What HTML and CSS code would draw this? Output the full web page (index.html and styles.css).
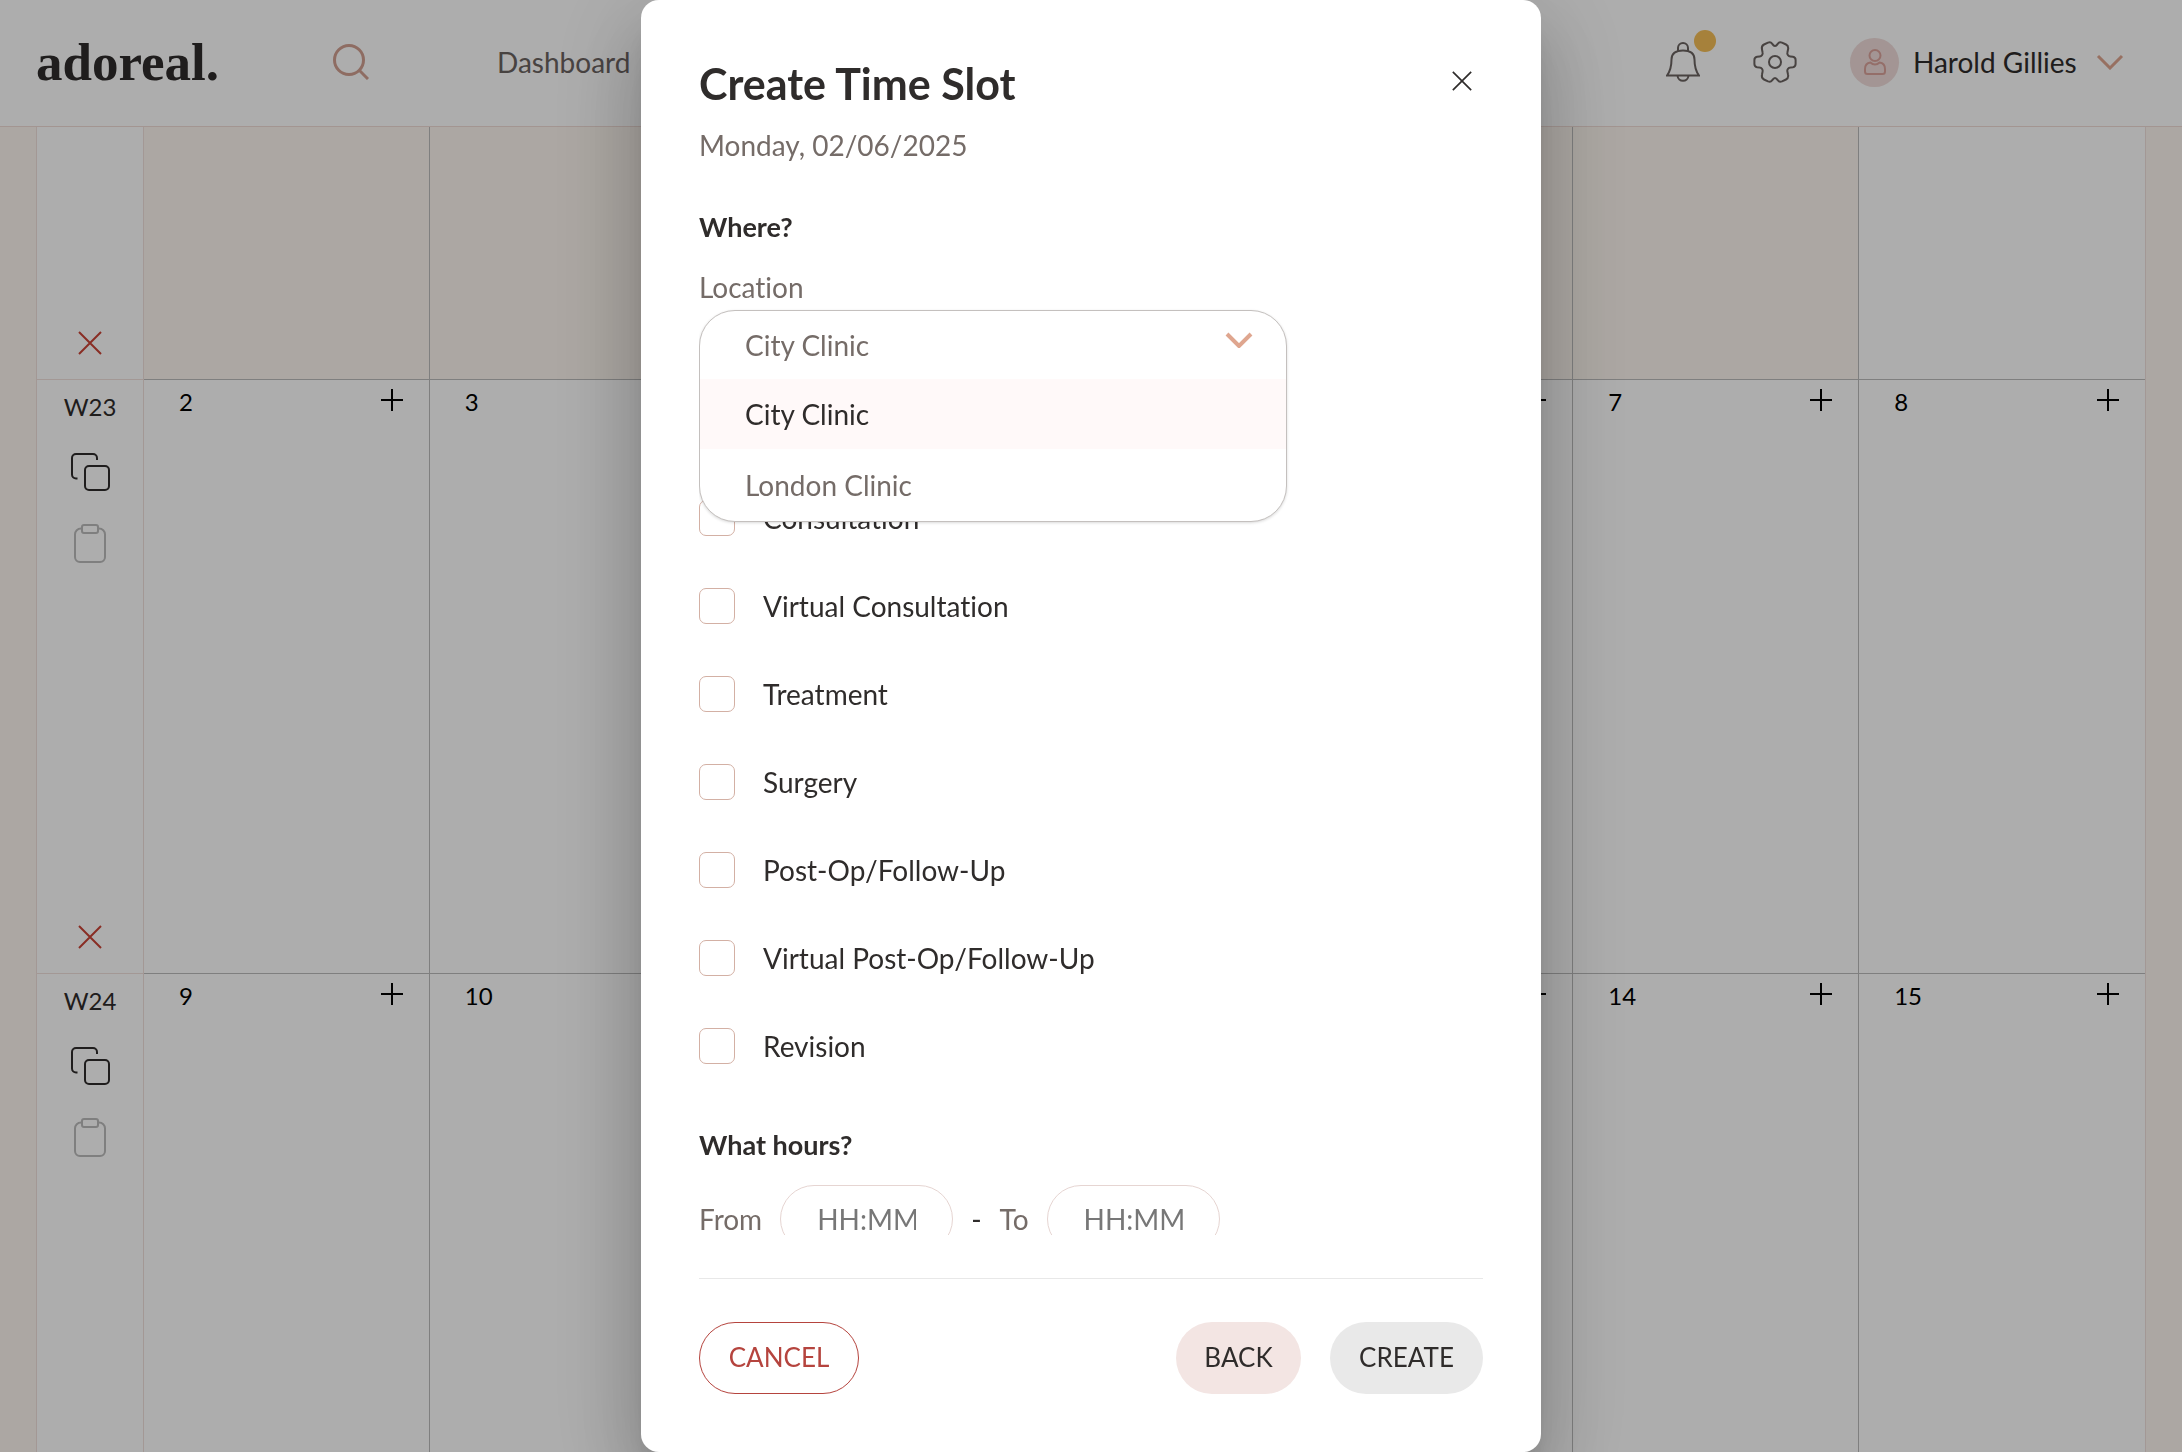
FILE: index.html
```html
<!DOCTYPE html>
<html lang="en">
<head>
    <meta charset="UTF-8">
    <meta name="viewport" content="width=device-width, initial-scale=1.0">
    <title>adoreal. - Calendar</title>
    <link rel="stylesheet" href="styles.css">
</head>
<body>

<!-- Shared icons -->
<svg class="sprite" aria-hidden="true">
    <symbol id="icon-cross" viewBox="0 0 24 24"><path d="M1 1l22 22M23 1L1 23"/></symbol>
    <symbol id="icon-plus" viewBox="0 0 24 24"><path d="M12 1v22M1 12h22"/></symbol>
    <symbol id="icon-chevron" viewBox="0 0 28 16"><path d="M2 2l12 12L26 2"/></symbol>
    <symbol id="icon-copy" viewBox="0 0 40 40">
        <path d="M7.500 26.500H6a4 4 0 0 1-4-4V6a4 4 0 0 1 4-4h17a4 4 0 0 1 4 4v2"/>
        <rect x="15" y="14" width="24" height="24" rx="4"/>
    </symbol>
    <symbol id="icon-paste" viewBox="0 0 32 40">
        <path d="M8 4.500H7a6 6 0 0 0-6 6V33a5 5 0 0 0 5 5h20a5 5 0 0 0 5-5V10.500a6 6 0 0 0-6-6h-1"/>
        <rect x="8" y="1" width="16" height="8" rx="2"/>
    </symbol>
</svg>

<header class="topbar">
    <a class="logo" href="#">adoreal.</a>
    <button class="icon-btn search" aria-label="Search">
        <svg viewBox="0 0 36 36"><circle cx="16" cy="16" r="14.500"/><path d="M26 26l9 9"/></svg>
    </button>
    <nav class="nav">
        <a href="#">Dashboard</a>
    </nav>
    <div class="topbar-right">
        <button class="icon-btn bell" aria-label="Notifications">
            <svg viewBox="0 0 34 40">
                <path d="M1 33.500h32c-3-4-4.500-8-4.500-16C28.500 11.500 24 8.500 17 8.500S5.500 11.500 5.500 17.500c0 8-1.500 12-4.500 16z"/>
                <path d="M12 9V6a5 5 0 0 1 10 0V9M11.500 33.500c.5 7 10.500 7 11 0"/>
            </svg>
            <span class="badge"></span>
        </button>
        <button class="icon-btn gear" aria-label="Settings">
            <svg viewBox="0 0 44 44">
                <circle cx="22" cy="22" r="6"/>
                <!-- One quarter of the outline, mirrored three times -->
                <path id="gear-quarter" d="M22 6c1.500 0 2-1 3-2.500 1-1.500 2.500-1.500 4-.9l4 1.900c2 1 2.500 3 2 5l-.6 3c-.5 2 1 3.700 3 3.900l2.500.4c1.500.3 2.700 1.500 2.700 3.200v2"/>
                <use href="#gear-quarter" transform="matrix(-1 0 0 1 44 0)"/>
                <use href="#gear-quarter" transform="matrix(1 0 0 -1 0 44)"/>
                <use href="#gear-quarter" transform="matrix(-1 0 0 -1 44 44)"/>
            </svg>
        </button>
        <button class="user">
            <span class="avatar">
                <svg viewBox="0 0 22 26"><circle cx="11" cy="6.500" r="5.500"/><path d="M6.500 13.500C3 14 1 16.500 1 20v2.500C1 24 2 25 3.500 25h15c1.500 0 2.500-1 2.500-2.500V20c0-3.500-2-6-5.500-6.500-2.500 2.500-6.500 2.500-9 0z"/></svg>
            </span>
            <span class="user-name">Harold Gillies</span>
            <svg class="chevron"><use href="#icon-chevron"/></svg>
        </button>
    </div>
</header>

<main class="calendar">
    <!-- Week 22, mostly scrolled away -->
    <div class="week week-cut">
        <div class="week-head">
            <button class="icon-btn clear" aria-label="Clear week 22"><svg><use href="#icon-cross"/></svg></button>
        </div>
        <div class="day past"></div>
        <div class="day past"></div>
        <div class="day past"></div>
        <div class="day past"></div>
        <div class="day past"></div>
        <div class="day past"></div>
        <div class="day"></div>
    </div>

    <div class="week">
        <div class="week-head">
            <span>W23</span>
            <button class="icon-btn copy" aria-label="Copy week 23"><svg><use href="#icon-copy"/></svg></button>
            <button class="icon-btn paste" aria-label="Paste week 23" disabled><svg><use href="#icon-paste"/></svg></button>
            <button class="icon-btn clear" aria-label="Clear week 23"><svg><use href="#icon-cross"/></svg></button>
        </div>
        <div class="day"><span>2</span><button class="icon-btn add" aria-label="Add"><svg><use href="#icon-plus"/></svg></button></div>
        <div class="day"><span>3</span></div>
        <div class="day"></div>
        <div class="day"></div>
        <div class="day"><button class="icon-btn add" aria-label="Add"><svg><use href="#icon-plus"/></svg></button></div>
        <div class="day"><span>7</span><button class="icon-btn add" aria-label="Add"><svg><use href="#icon-plus"/></svg></button></div>
        <div class="day"><span>8</span><button class="icon-btn add" aria-label="Add"><svg><use href="#icon-plus"/></svg></button></div>
    </div>

    <div class="week">
        <div class="week-head">
            <span>W24</span>
            <button class="icon-btn copy" aria-label="Copy week 24"><svg><use href="#icon-copy"/></svg></button>
            <button class="icon-btn paste" aria-label="Paste week 24" disabled><svg><use href="#icon-paste"/></svg></button>
        </div>
        <div class="day"><span>9</span><button class="icon-btn add" aria-label="Add"><svg><use href="#icon-plus"/></svg></button></div>
        <div class="day"><span>10</span></div>
        <div class="day"></div>
        <div class="day"></div>
        <div class="day"><button class="icon-btn add" aria-label="Add"><svg><use href="#icon-plus"/></svg></button></div>
        <div class="day"><span>14</span><button class="icon-btn add" aria-label="Add"><svg><use href="#icon-plus"/></svg></button></div>
        <div class="day"><span>15</span><button class="icon-btn add" aria-label="Add"><svg><use href="#icon-plus"/></svg></button></div>
    </div>
</main>

<!-- Create time slot dialog -->
<div class="overlay">
    <form class="dialog" role="dialog" aria-labelledby="dialog-title">
        <div class="dialog-header">
            <div>
                <h1 id="dialog-title">Create Time Slot</h1>
                <p class="date">Monday, 02/06/2025</p>
            </div>
            <button type="button" class="icon-btn close" aria-label="Close"><svg><use href="#icon-cross"/></svg></button>
        </div>

        <div class="dialog-body">
            <h2>Where?</h2>
            <label class="field-label" for="location">Location</label>
            <div class="select-wrap">
                <div class="dropdown">
                    <select id="location">
                        <option>City Clinic</option>
                        <option>London Clinic</option>
                    </select>
                    <svg class="chevron"><use href="#icon-chevron"/></svg>
                    <ul role="listbox" aria-label="Location">
                        <li role="option" aria-selected="true" class="selected">City Clinic</li>
                        <li role="option" aria-selected="false">London Clinic</li>
                    </ul>
                </div>
            </div>

            <div class="checks">
                <label><input type="checkbox"> Consultation</label>
                <label><input type="checkbox"> Virtual Consultation</label>
                <label><input type="checkbox"> Treatment</label>
                <label><input type="checkbox"> Surgery</label>
                <label><input type="checkbox"> Post-Op/Follow-Up</label>
                <label><input type="checkbox"> Virtual Post-Op/Follow-Up</label>
                <label><input type="checkbox"> Revision</label>
            </div>

            <h2>What hours?</h2>
            <div class="hours">
                <label for="from">From</label>
                <input id="from" type="text" placeholder="HH:MM">
                <span>-</span>
                <label for="to">To</label>
                <input id="to" type="text" placeholder="HH:MM">
            </div>
        </div>

        <div class="dialog-footer">
            <button type="button" class="btn btn-cancel">CANCEL</button>
            <button type="button" class="btn btn-back">BACK</button>
            <button type="submit" class="btn btn-create">CREATE</button>
        </div>
    </form>
</div>

</body>
</html>
```
FILE: styles.css
```css
* {
    box-sizing: border-box;
}

html, body {
    height: 100%;
    margin: 0;
}

body {
    display: flex;
    flex-direction: column;
    overflow: hidden;
    background-color: #fef7f0;
    color: #2f2c2b;
    font-family: Lato, "Open Sans", sans-serif;
    font-size: 28px;
    font-variant-ligatures: none;
    line-height: 34px;
}

h1, h2, p, ul {
    margin: 0;
    padding: 0;
}

button, input, select {
    font: inherit;
    color: inherit;
}

a {
    color: inherit;
    text-decoration: none;
}

svg {
    display: block;
    fill: none;
    stroke: currentColor;
    stroke-width: 2;
}

.sprite {
    position: absolute;
    width: 0;
    height: 0;
}

.icon-btn {
    display: block;
    position: relative;
    padding: 0;
    border: 0;
    background: none;
}

.chevron {
    width: 28px;
    height: 16px;
    color: #dfa68f;
    stroke-width: 3;
}

/* Top bar */
.topbar {
    display: flex;
    flex: none;
    align-items: center;
    height: 127px;
    padding: 0 58px 2px 36px;
    background-color: #fff;
    border-bottom: 1px solid #f0dcd6;
}

.logo {
    width: 297px;
    font-family: "Liberation Serif", serif;
    font-size: 53px;
    font-weight: bold;
    line-height: 60px;
}

.search svg {
    width: 36px;
    height: 36px;
    color: #d1a091;
    stroke-width: 3;
}

.nav {
    margin-left: 128px;
    color: #6b6361;
}

.topbar-right {
    display: flex;
    align-items: center;
    margin-left: auto;
}

.bell svg {
    width: 34px;
    height: 40px;
}

.bell, .gear {
    color: #6b6361;
}

/* Unread dot, sits over the bell */
.badge {
    position: absolute;
    top: -12px;
    right: -16px;
    width: 22px;
    height: 22px;
    border-radius: 50%;
    background-color: #f5bf57;
}

.gear {
    margin: 0 53px;
}

.gear svg {
    width: 44px;
    height: 44px;
}

.user {
    display: flex;
    align-items: center;
    gap: 14px;
    padding: 0;
    border: 0;
    background: none;
}

.user-name {
    min-width: 169px;
    text-align: left;
}

.avatar {
    display: flex;
    align-items: center;
    justify-content: center;
    width: 49px;
    height: 49px;
    border-radius: 50%;
    background-color: #f0dcda;
    color: #dba39b;
}

.avatar svg {
    width: 22px;
    height: 26px;
}

/* Calendar */
.calendar {
    flex: 1;
    margin: 0 36px;
    overflow: hidden;
    font-size: 24px;
}

.week {
    display: grid;
    grid-template-columns: 107px repeat(7, 1fr);
    height: 594px;
    border-right: 1px solid #f0e0dc;
    border-left: 1px solid #f0e0dc;
}

.week-cut {
    height: 253px;
}

.week-head {
    display: flex;
    flex-direction: column;
    align-items: center;
    padding: 10px 0 24px;
    background-color: #fff;
    border-right: 1px solid #f0e0dc;
    border-bottom: 1px solid #f0e0dc;
}

.day {
    display: flex;
    align-items: flex-start;
    justify-content: space-between;
    padding: 5px 25px 0 35px;
    background-color: #fff;
    border-right: 1px solid #bbb;
    border-bottom: 1px solid #bbb;
    color: #000;
}

.day:last-child {
    border-right: 0;
}

.past {
    background-color: #fef7f0;
}

.add {
    margin-left: auto;
    padding-top: 3px;
}

.add svg, .clear svg {
    width: 24px;
    height: 24px;
}

.clear {
    margin-top: auto;
    color: #cb4335;
}

.copy {
    margin-top: 28px;
}

.copy svg {
    width: 40px;
    height: 40px;
}

.paste {
    margin-top: 32px;
    color: #bbb;
}

.paste svg {
    width: 32px;
    height: 40px;
}

/* Dialog */
.overlay {
    position: fixed;
    inset: 0;
    display: flex;
    justify-content: center;
    background-color: rgba(0, 0, 0, 0.32);
}

.dialog {
    display: flex;
    flex-direction: column;
    width: 100%;
    max-width: 900px;
    padding: 60px 58px 58px;
    border-radius: 18px;
    background-color: #fff;
    box-shadow: 0 22px 30px -14px rgba(0, 0, 0, 0.2),
                0 48px 76px 6px rgba(0, 0, 0, 0.14),
                0 18px 92px 16px rgba(0, 0, 0, 0.12);
}

.dialog-header {
    display: flex;
    justify-content: space-between;
}

h1 {
    font-size: 43px;
    line-height: 48px;
}

h2 {
    font-size: 27px;
    line-height: 34px;
}

.date {
    margin-top: 20px;
    color: #756c68;
}

.close {
    align-self: flex-start;
    padding: 11px;
}

.close svg {
    width: 20px;
    height: 20px;
}

.dialog-body {
    flex: 1;
    min-height: 0;
    padding-top: 48px;
    overflow: hidden;
}

.field-label {
    display: block;
    margin: 26px 0 6px;
    color: #756c68;
}

.select-wrap {
    position: relative;
    width: 75%;
    height: 72px;
    margin-bottom: 118px;
}

/* Open list covers the rows below it */
.dropdown {
    position: absolute;
    top: 0;
    left: 0;
    z-index: 1;
    width: 100%;
    overflow: hidden;
    border: 1px solid #c4c0be;
    border-radius: 36px;
    background-color: #fff;
    color: #756c68;
    box-shadow: 0 1px 3px rgba(0, 0, 0, 0.15);
}

.dropdown select {
    display: block;
    width: 100%;
    height: 68px;
    padding: 0 45px;
    border: 0;
    background: none;
    appearance: none;
}

.dropdown .chevron {
    position: absolute;
    top: 21px;
    right: 33px;
    stroke-width: 4;
}

.dropdown ul {
    list-style: none;
}

.dropdown li {
    padding: 19px 45px;
}

.dropdown .selected {
    padding: 18px 45px;
    background-color: #fff9f9;
    color: #2f2c2b;
}

.checks {
    display: flex;
    flex-direction: column;
    gap: 52px;
    margin-bottom: 64px;
}

.checks label {
    display: flex;
    align-items: center;
    gap: 28px;
    height: 36px;
}

.checks input {
    width: 36px;
    height: 36px;
    margin: 0;
    border: 1px solid #d3b0a4;
    border-radius: 7px;
    background-color: #fff;
    appearance: none;
}

.hours {
    display: flex;
    align-items: center;
    gap: 18px;
    margin-top: 23px;
}

.hours label {
    color: #756c68;
}

.hours input {
    width: 173px;
    height: 68px;
    padding: 0 36px;
    border: 1px solid #e6d5d2;
    border-radius: 34px;
    background-color: #fff;
}

.hours input::placeholder {
    color: #777;
}

.dialog-footer {
    display: flex;
    gap: 29px;
    margin-top: 43px;
    padding-top: 43px;
    border-top: 1px solid #e8e8e8;
}

.btn {
    height: 72px;
    padding: 0 27px 2px;
    border: 0;
    border-radius: 36px;
    font-size: 26px;
}

.btn-cancel {
    min-width: 160px;
    margin-right: auto;
    border: 1px solid #b5443e;
    background-color: #fff;
    color: #b5443e;
}

.btn-back {
    min-width: 125px;
    background-color: #f3e5e3;
}

.btn-create {
    min-width: 153px;
    background-color: #e9e9e9;
}
```
